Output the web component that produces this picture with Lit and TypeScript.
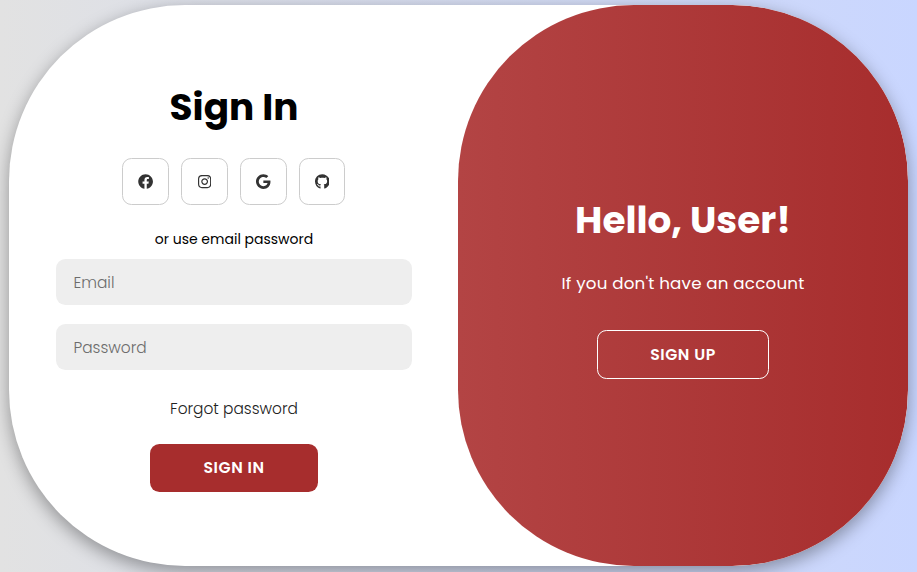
import { LitElement, html, css, svg } from "lit";
import { customElement } from "lit/decorators.js";

const icons = [
  {
    name: "Facebook",
    width: 512,
    d: "M504 256C504 119 393 8 256 8S8 119 8 256c0 123.78 90.69 226.38 209.25 245V327.69h-63V256h63v-54.64c0-62.15 37-96.48 93.67-96.48 27.14 0 55.52 4.84 55.52 4.84v61h-31.28c-30.8 0-40.41 19.12-40.41 38.73V256h68.78l-11 71.69h-57.78V501C413.31 482.38 504 379.78 504 256z",
  },
  {
    name: "Instagram",
    width: 448,
    d: "M224.1 141c-63.6 0-114.9 51.3-114.9 114.9s51.3 114.9 114.9 114.9S339 319.5 339 255.9 287.7 141 224.1 141zm0 189.6c-41.1 0-74.7-33.5-74.7-74.7s33.5-74.7 74.7-74.7 74.7 33.5 74.7 74.7-33.6 74.7-74.7 74.7zm146.4-194.3c0 14.9-12 26.8-26.8 26.8-14.9 0-26.8-12-26.8-26.8s12-26.8 26.8-26.8 26.8 12 26.8 26.8zm76.1 27.2c-1.7-35.9-9.9-67.7-36.2-93.9-26.2-26.2-58-34.4-93.9-36.2-37-2.1-147.9-2.1-184.9 0-35.8 1.7-67.6 9.9-93.9 36.1s-34.4 58-36.2 93.9c-2.1 37-2.1 147.9 0 184.9 1.7 35.9 9.9 67.7 36.2 93.9s58 34.4 93.9 36.2c37 2.1 147.9 2.1 184.9 0 35.9-1.7 67.7-9.9 93.9-36.2 26.2-26.2 34.4-58 36.2-93.9 2.1-37 2.1-147.8 0-184.8zM398.8 388c-7.8 19.6-22.9 34.7-42.6 42.6-29.5 11.7-99.5 9-132.1 9s-102.7 2.6-132.1-9c-19.6-7.8-34.7-22.9-42.6-42.6-11.7-29.5-9-99.5-9-132.1s-2.6-102.7 9-132.1c7.8-19.6 22.9-34.7 42.6-42.6 29.5-11.7 99.5-9 132.1-9s102.7-2.6 132.1 9c19.6 7.8 34.7 22.9 42.6 42.6 11.7 29.5 9 99.5 9 132.1s2.7 102.7-9 132.1z",
  },
  {
    name: "Google",
    width: 488,
    d: "M488 261.8C488 403.3 391.1 504 248 504 110.8 504 0 393.2 0 256S110.8 8 248 8c66.8 0 123 24.5 166.3 64.9l-67.5 64.9C258.5 52.6 94.3 116.6 94.3 256c0 86.5 69.1 156.6 153.7 156.6 98.2 0 135-70.4 140.8-106.9H248v-85.3h236.1c2.3 12.7 3.9 24.9 3.9 41.4z",
  },
  {
    name: "GitHub",
    width: 496,
    d: "M244.8 8C106.1 8 0 113.3 0 252c0 110.9 69.8 205.8 169.5 239.2 12.8 2.3 17.3-5.6 17.3-12.1 0-6.2-.3-40.4-.3-61.4 0 0-70 15-84.7-29.8 0 0-11.4-29.1-27.8-36.6 0 0-22.9-15.7 1.6-15.4 0 0 24.9 2 38.6 25.8 21.9 38.6 58.6 27.5 72.9 20.9 2.3-16 8.8-27.1 16-33.7-55.9-6.2-112.3-14.3-112.3-110.5 0-27.5 7.6-41.3 23.6-58.9-2.6-6.5-11.1-33.3 2.6-67.9 20.9-6.5 69 27 69 27 20-5.6 41.5-8.5 62.8-8.5s42.8 2.9 62.8 8.5c0 0 48.1-33.6 69-27 13.7 34.7 5.2 61.4 2.6 67.9 16 17.7 25.8 31.5 25.8 58.9 0 96.5-58.9 104.2-114.8 110.5 9.2 7.9 17 22.9 17 46.4 0 33.7-.3 75.4-.3 83.6 0 6.5 4.6 14.4 17.3 12.1C428.2 457.8 496 362.9 496 252 496 113.3 383.5 8 244.8 8z",
  },
];

@customElement("app-root")
export class AppRoot extends LitElement {
  static styles = css`
    :host {
      display: flex;
      box-sizing: border-box;
      height: 100vh;
      padding: 5px 9px 6px;
      overflow: hidden;
      background: linear-gradient(to right, #e2e2e2, #c9d6ff);
      font-family: Poppins, Inter, "Open Sans", sans-serif;
    }
    * { box-sizing: border-box; margin: 0; }
    .card {
      flex: 1;
      display: grid;
      grid-template-columns: 449px 450px;
      border-radius: 176px;
      overflow: hidden;
      background: #fff;
      box-shadow: 0 5.85px 17.5px rgba(0, 0, 0, 0.35);
    }
    form, .panel {
      display: flex;
      flex-direction: column;
      align-items: center;
    }
    form { padding: 74px 46px 0 47px; }
    .panel {
      padding-top: 187px;
      border-radius: 176px 175px 175px 176px;
      color: #fff;
      background: linear-gradient(to right, #b34444, #a72d2d);
    }
    h1 {
      height: 56px;
      font-size: 37.4px;
      line-height: 56px;
      font-weight: 700;
      white-space: nowrap;
    }
    .social { display: flex; gap: 12px; margin: 23px 1px 0 0; }
    .social a {
      display: flex;
      align-items: center;
      justify-content: center;
      width: 47px;
      height: 47px;
      border: 1px solid #ccc;
      border-radius: 9.4px;
    }
    .social a:last-child { width: 46px; }
    .social svg { height: 15.2px; fill: #333; display: block; }
    .hint {
      margin-top: 23px;
      height: 22px;
      font-size: 14px;
      line-height: 22px;
      white-space: nowrap;
    }
    input {
      width: 356px;
      height: 46px;
      margin-top: 9px;
      padding: 1px 17.5px 0;
      border: 0;
      border-radius: 9.4px;
      outline: 0;
      background: #eee;
      font: 300 15.4px Poppins, Inter, "Open Sans", sans-serif;
    }
    input + input { margin-top: 19px; }
    input::placeholder { color: #6c6c6c; }
    .forgot {
      margin-top: 27px;
      height: 24px;
      color: #222;
      font-size: 15.4px;
      font-weight: 300;
      line-height: 24px;
      text-decoration: none;
    }
    button {
      border: 1px solid transparent;
      border-radius: 9.4px;
      padding: 0;
      color: #fff;
      font: 600 15.7px Poppins, Inter, "Open Sans", sans-serif;
      letter-spacing: 0.55px;
      text-transform: uppercase;
    }
    .signin { width: 168px; height: 48px; margin-top: 23px; padding-bottom: 1px; background: #a72d2d; }
    .signup { width: 172px; height: 49px; margin-top: 35px; border-color: #fff; background: transparent; }
    .lead {
      margin-top: 24px;
      height: 23px;
      font-size: 16.7px;
      line-height: 23px;
      letter-spacing: 0.2px;
      white-space: nowrap;
    }
  `;

  render() {
    return html`
      <main class="card">
        <form>
          <h1>Sign In</h1>
          <nav class="social">
            ${icons.map(
              (i) => html`<a aria-label=${i.name}>
                <svg viewBox="0 0 ${i.width} 512">${svg`<path d=${i.d}></path>`}</svg>
              </a>`
            )}
          </nav>
          <span class="hint">or use email password</span>
          <input class="email" type="email" placeholder="Email" />
          <input class="password" type="password" placeholder="Password" />
          <a class="forgot">Forgot password</a>
          <button class="signin" type="button">Sign In</button>
        </form>
        <section class="panel">
          <h1>Hello, User!</h1>
          <p class="lead">If you don't have an account</p>
          <button class="signup" type="button">Sign Up</button>
        </section>
      </main>
    `;
  }
}
